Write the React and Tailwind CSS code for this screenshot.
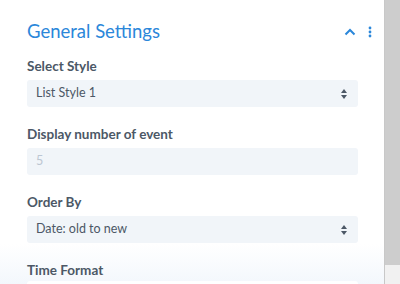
export default function App() {
  const font = { fontFamily: 'Lato, "Open Sans", sans-serif' };
  const Arrows = () => (
    <svg width="8" height="12" viewBox="0 0 8 12" className="shrink-0">
      <path d="M4 1 L7 5 L1 5 Z" fill="#4c5866" />
      <path d="M4 11 L7 7 L1 7 Z" fill="#4c5866" />
    </svg>
  );
  return (
    <div className="flex w-[400px] h-[284px] overflow-hidden bg-white" style={font}>
      <div className="flex-1 flex flex-col relative">
        <div className="h-[3px] bg-[#f1f4fa]" />
        <div className="flex items-center justify-between pl-[27px] pr-[12px] pt-[19px]">
          <span className="text-[18.5px] leading-[25px] text-[#2b87da]">General Settings</span>
          <div className="flex items-center gap-[12px]">
            <svg width="12" height="8" viewBox="0 0 12 8">
              <path d="M1.5 6.5 L6 2 L10.5 6.5" stroke="#2b87da" strokeWidth="2" fill="none" />
            </svg>
            <svg width="4" height="12" viewBox="0 0 4 12">
              <circle cx="2" cy="2" r="1.4" fill="#2b87da" />
              <circle cx="2" cy="6" r="1.4" fill="#2b87da" />
              <circle cx="2" cy="10" r="1.4" fill="#2b87da" />
            </svg>
          </div>
        </div>
        <div className="flex flex-col pl-[27px] pr-[26px] pt-[13px]">
          <div className="text-[13.5px] leading-[18px] font-bold text-[#4c5866]">Select Style</div>
          <div className="mt-[5px] h-[27px] rounded-[3px] bg-[#f1f5f9] flex items-center justify-between pl-[9px] pr-[10px]">
            <span className="text-[12.5px] text-[#4c5866]">List Style 1</span>
            <Arrows />
          </div>
          <div className="mt-[18px] text-[13.5px] leading-[18px] font-bold text-[#4c5866]">Display number of event</div>
          <div className="mt-[5px] h-[27px] rounded-[3px] bg-[#f1f5f9] flex items-center pl-[9px]">
            <span className="text-[12.5px] text-[#bcc6d2]">5</span>
          </div>
          <div className="mt-[18px] text-[13.5px] leading-[18px] font-bold text-[#4c5866]">Order By</div>
          <div className="mt-[5px] h-[27px] rounded-[3px] bg-[#f1f5f9] flex items-center justify-between pl-[9px] pr-[10px]">
            <span className="text-[12.5px] text-[#4c5866]">Date: old to new</span>
            <Arrows />
          </div>
          <div className="mt-[18px] text-[13.5px] leading-[18px] font-bold text-[#4c5866] relative z-10">Time Format</div>
          <div className="mt-[2px] h-[27px] rounded-[3px] bg-white relative z-10" />
        </div>
        <div className="absolute left-0 right-0 bottom-0 h-[40px] bg-gradient-to-b from-transparent to-[#eef4fb] opacity-70" />
      </div>
      <div className="w-[16px] flex flex-col border-l border-[#c8c8c8]">
        <div className="h-[265px] bg-[#cdcdcd]" />
        <div className="flex-1 bg-[#f1f1f1]" />
      </div>
    </div>
  );
}
